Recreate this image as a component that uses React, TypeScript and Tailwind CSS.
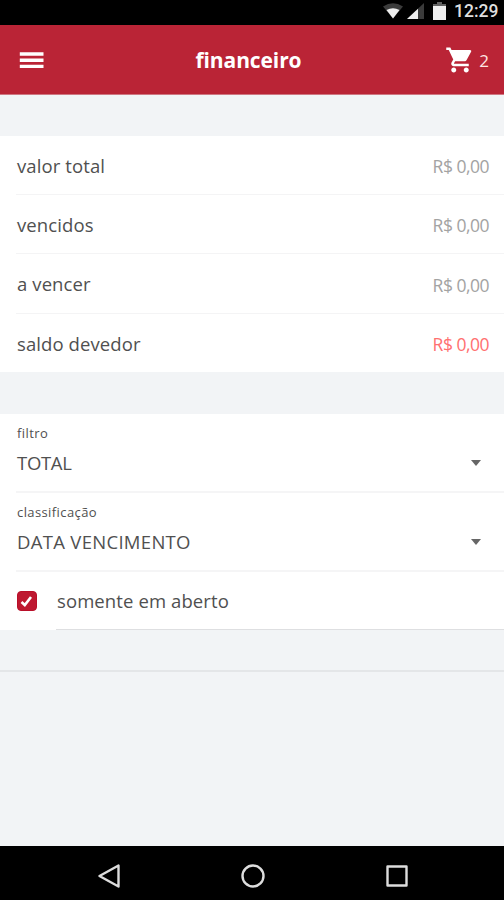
import React from 'react';

const summary = [
  { label: 'valor total', height: 'h-[59px]' },
  { label: 'vencidos', height: 'h-[59px]' },
  { label: 'a vencer', height: 'h-[60px]' },
  { label: 'saldo devedor', height: 'h-[58px]' },
];

function Caret() {
  return (
    <svg className="h-[6px] w-[10px]" viewBox="0 0 10 6">
      <path d="M0 0h10L5 6z" fill="#666" />
    </svg>
  );
}

function SelectRow({ label, value, tracking }: { label: string; value: string; tracking: string }) {
  return (
    <div className="ml-4 flex items-end justify-between border-b-2 border-[#f5f5f6] pr-[23px] pl-px">
      <div className="pt-[10px] pb-[15px]">
        <div className="h-[18px] text-[13px] leading-[18px] tracking-[0.4px] text-[#505050]">{label}</div>
        <div className={`mt-[8px] h-[26px] text-[18.5px] leading-[26px] ${tracking}`}>{value}</div>
      </div>
      <div className="pb-[25px]">
        <Caret />
      </div>
    </div>
  );
}

export default function App() {
  return (
    <div className="flex h-[900px] w-[504px] flex-col overflow-hidden bg-[#f2f4f6] font-['Open_Sans','Noto_Sans',sans-serif] text-[#505050]">
      <div className="flex h-[25px] shrink-0 items-start bg-black pl-[383px]">
        <svg className="mt-[3px] h-[16px] w-[20px]" viewBox="0 0 20 16">
          <path d="M0 3.5Q10-3 20 3.5L10 15.5z" fill="#3b3b3b" />
          <path d="M3.500 7Q10 3.500 16.500 7L10 15.5z" fill="#eee" />
        </svg>
        <svg className="mt-[3px] ml-[4px] h-[16px] w-[17px]" viewBox="0 0 17 16">
          <path d="M17 0v16H0z" fill="#3b3b3b" />
          <path d="M11 5.7V16H0z" fill="#eee" />
        </svg>
        <svg className="mt-[2px] ml-[9px] h-[18px] w-[13px]" viewBox="0 0 13 18">
          <path d="M4 0h5v2h4v4H0V2h4z" fill="#606060" />
          <path d="M0 4h13v14H0z" fill="#eee" />
        </svg>
        <span className="ml-[8px] font-[Roboto,sans-serif] text-[17.5px] leading-[23px] font-medium text-[#dedede]">12:29</span>
      </div>
      <header className="grid h-[70px] shrink-0 grid-cols-[1fr_auto_1fr] items-center border-b border-[#cf7782] bg-[#ba2436] text-white">
        <svg className="ml-[19px] h-[18px] w-[25px]" viewBox="0 0 25 18">
          <path d="M.8 1.300h23.700v3.400H.8zM.8 7.500h23.700v3.400H.8zM.8 13.700h23.700v3.400H.8z" fill="#fff" />
        </svg>
        <h1 className="mr-[7px] text-[21px] leading-[28px] font-bold tracking-[-0.1px]">financeiro</h1>
        <div className="flex items-center justify-end pr-[15px]">
          <svg className="mt-px h-[30px] w-[30px]" viewBox="0 0 24 24" fill="#fff">
            <path d="M7 18c-1.1 0-1.99.9-1.99 2S5.900 22 7 22s2-.9 2-2-.9-2-2-2zM1 2v2h2l3.600 7.590-1.350 2.450c-.160.280-.250.610-.250.960 0 1.100.9 2 2 2h12v-2H7.420c-.140 0-.250-.110-.250-.250l.030-.120.900-1.630h7.450c.750 0 1.410-.410 1.750-1.030l3.580-6.490A1 1 0 0 0 20 4H5.210l-.940-2H1zm16 16c-1.100 0-1.990.9-1.990 2s.890 2 1.990 2 2-.9 2-2-.9-2-2-2z" />
          </svg>
          <span className="mt-[2px] ml-[4px] text-[17px] leading-6 font-medium text-[#ffe4e4]">2</span>
        </div>
      </header>
      <section className="mt-[41px] shrink-0 bg-white">
        {summary.map((row, i) => (
          <div
            key={row.label}
            className={`ml-4 flex items-center justify-between pt-px pr-[15px] pl-px ${row.height} ${i < 3 ? 'border-b border-[#f4f4f5]' : ''}`}
          >
            <span className="text-[18.5px] leading-[26px] tracking-[0.1px]">{row.label}</span>
            <span className={`pt-px text-[17.5px] leading-[26px] tracking-[-0.5px] ${i === 3 ? 'text-[#ff7070]' : 'text-[#a3a3a3]'}`}>R$ 0,00</span>
          </div>
        ))}
      </section>
      <section className="mt-[42px] shrink-0 bg-white">
        <SelectRow label="filtro" value="TOTAL" tracking="tracking-[-0.3px]" />
        <SelectRow label="classificação" value="DATA VENCIMENTO" tracking="tracking-[0.3px]" />
        <div className="flex h-[58px] items-stretch pl-4">
          <div className="mt-[19px] ml-[0.5px] flex h-[20px] w-[20px] items-center justify-center rounded-[4px] border border-[#b90f29] bg-[#be1830]">
            <svg className="h-[13px] w-[13px]" viewBox="0 0 13 13">
              <path d="M1.500 7L4.800 10L11 2" stroke="#fff" strokeWidth="2.600" fill="none" />
            </svg>
          </div>
          <div className="ml-[19.5px] flex flex-1 items-center border-b border-[#dedfe1] pt-px pl-px text-[18.5px] tracking-[0.1px]">somente em aberto</div>
        </div>
      </section>
      <div className="mt-[40px] h-[2px] shrink-0 bg-[#e4e6e8]" />
      <div className="flex-1" />
      <nav className="flex h-[54px] shrink-0 items-center justify-center gap-[120px] bg-black pt-[5px] pl-px">
        <svg className="h-6 w-6" viewBox="0 0 24 24" fill="none" stroke="#ddd" strokeWidth="2.400" strokeLinejoin="round">
          <path d="M21.500 1.500v21L2.500 12z" />
        </svg>
        <svg className="h-6 w-6" viewBox="0 0 24 24" fill="none" stroke="#ddd" strokeWidth="2.400">
          <circle cx="12" cy="12" r="10.500" />
        </svg>
        <svg className="h-6 w-6" viewBox="0 0 24 24" fill="none" stroke="#ddd" strokeWidth="2.400" strokeLinejoin="round">
          <path d="M2.500 2.500h19v19h-19z" />
        </svg>
      </nav>
    </div>
  );
}
